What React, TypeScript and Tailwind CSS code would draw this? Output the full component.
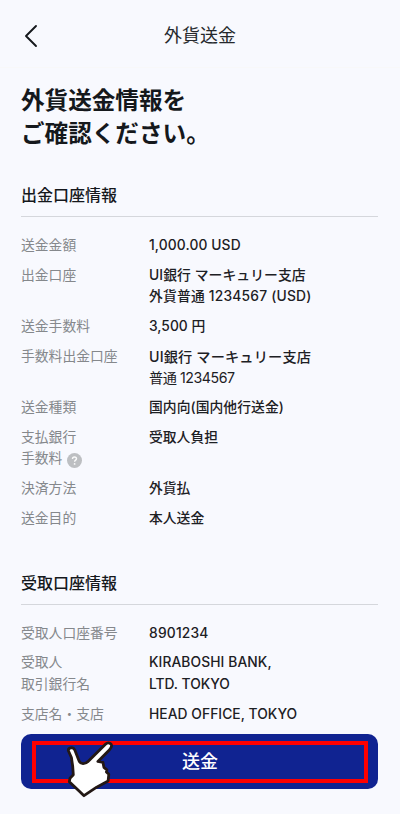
import type { ReactNode } from 'react';

type Row = {
  label: ReactNode[];
  value: ReactNode[];
};

function HelpIcon() {
  return (
    <svg viewBox="0 0 15 15" className="ml-[5px] h-[15px] w-[15px] shrink-0 translate-y-px">
      <circle cx="7.5" cy="7.5" r="7.5" fill="#bdbfc2" />
      <path
        d="M5.5 6C5.5 4.8 6.3 4 7.5 4s2 .7 2 1.8c0 1.3-1.9 1.4-1.9 3"
        fill="none"
        stroke="#fafafa"
        strokeWidth="1.4"
      />
      <circle cx="7.6" cy="10.9" r="0.9" fill="#fafafa" />
    </svg>
  );
}

function PointingHand() {
  return (
    <svg viewBox="0 0 50 60" className="absolute top-[5px] left-[44px] h-[60px] w-[50px]">
      <path
        d="M3.4 11.8C2.8 9.2 7.8 7 9.7 10.8L14 21.7C15.5 25.6 20 25.6 23.3 22.3L40.7 5C43.5 2.4 48.2 5 46 8.5C45.6 9.4 45 10.3 44.3 11L32.9 22.4L37.9 23.3L38.9 28.3L41.9 30.8L41.4 33L43.8 35.3L43.1 41.9L31.7 48.2L19 56.7L13.3 51.2L4.3 42.7L5 39.2L8.3 35.7L7.7 27.3L6.4 18.5Z"
        fill="#ffffff"
        stroke="#231815"
        strokeWidth="2.8"
        strokeLinejoin="round"
      />
    </svg>
  );
}

const withdrawalRows: Row[] = [
  { label: ['送金金額'], value: [<span className="tracking-[0.12px]">1,000.00 USD</span>] },
  {
    label: ['出金口座'],
    value: [
      <span className="tracking-[0.08px]">UI銀行 マーキュリー支店</span>,
      <span className="tracking-[0.2px]">外貨普通 1234567 (USD)</span>,
    ],
  },
  { label: ['送金手数料'], value: ['3,500 円'] },
  {
    label: ['手数料出金口座'],
    value: [
      <span className="block text-[14.2px] tracking-[0.16px]">UI銀行 マーキュリー支店</span>,
      <span className="block text-[14.2px] font-normal tracking-[-0.45px]">普通 1234567</span>,
    ],
  },
  { label: ['送金種類'], value: [<span className="tracking-[0.05px]">国内向(国内他行送金)</span>] },
  {
    label: [
      '支払銀行',
      <span className="flex items-center">
        手数料
        <HelpIcon />
      </span>,
    ],
    value: ['受取人負担'],
  },
  { label: ['決済方法'], value: ['外貨払'] },
  { label: ['送金目的'], value: ['本人送金'] },
];

const recipientRows: Row[] = [
  { label: ['受取人口座番号'], value: [<span className="tracking-[0.2px]">8901234</span>] },
  {
    label: ['受取人', '取引銀行名'],
    value: [<span className="tracking-[0.1px]">KIRABOSHI BANK,</span>, 'LTD. TOKYO'],
  },
  { label: ['支店名・支店'], value: [<span className="tracking-[0.06px]">HEAD OFFICE, TOKYO</span>] },
];

function Lines({ items }: { items: ReactNode[] }) {
  return (
    <>
      {items.map((item, i) => (
        <div key={i} className="h-[21.5px] whitespace-nowrap">
          {item}
        </div>
      ))}
    </>
  );
}

function Section({ title, rows }: { title: string; rows: Row[] }) {
  return (
    <section>
      <h2 className="border-b border-[#d5d7dc] pb-[9px] text-[16px] leading-6 font-medium text-[#15181c]">
        {title}
      </h2>
      <dl className="flex flex-col gap-[8.3px] pt-[18px] text-[13.8px] leading-[21.5px]">
        {rows.map((row, i) => (
          <div key={i} className="flex">
            <dt className="w-32 shrink-0 text-[#85888c]">
              <Lines items={row.label} />
            </dt>
            <dd className="font-medium text-[#1d2024]">
              <Lines items={row.value} />
            </dd>
          </div>
        ))}
      </dl>
    </section>
  );
}

export default function App() {
  return (
    <div className="flex h-[814px] w-[400px] flex-col overflow-hidden bg-[#f8f9fe] font-['Inter','Noto_Sans_CJK_JP',sans-serif]">
      <header className="flex h-[68px] shrink-0 items-center border-b border-[#f8f8f9] px-[21px] pt-[5px]">
        <button className="w-8" aria-label="戻る">
          <svg viewBox="0 0 20 24" className="h-6 w-5">
            <path
              d="M15 2L5 12L15 22"
              fill="none"
              stroke="#15181c"
              strokeWidth="1.9"
              strokeLinecap="round"
              strokeLinejoin="round"
            />
          </svg>
        </button>
        <h1 className="flex-1 text-center text-[18px] leading-6 text-[#25282c]">外貨送金</h1>
        <div className="w-8" />
      </header>

      <main className="flex min-h-0 flex-1 flex-col overflow-hidden pt-[16px] pr-[22px] pl-[21px]">
        <p className="text-[23.6px] leading-[33px] font-bold text-[#15181c]">
          外貨送金情報を
          <br />
          ご確認ください。
        </p>
        <div className="flex flex-col gap-[41px] pt-[33px]">
          <Section title="出金口座情報" rows={withdrawalRows} />
          <Section title="受取口座情報" rows={recipientRows} />
        </div>
      </main>

      {/* Fixed action area */}
      <footer className="relative h-[80px] shrink-0 px-[21px]">
        <button className="h-[55px] w-[357px] rounded-[10px] bg-[#102391] p-[7px_10px_6px_11px]">
          <span className="flex h-full items-center justify-center border-4 border-[#ff0000] pb-px text-[18px] font-medium text-white">
            送金
          </span>
        </button>
        <div className="absolute top-0 left-[21px]">
          <PointingHand />
        </div>
      </footer>
    </div>
  );
}
